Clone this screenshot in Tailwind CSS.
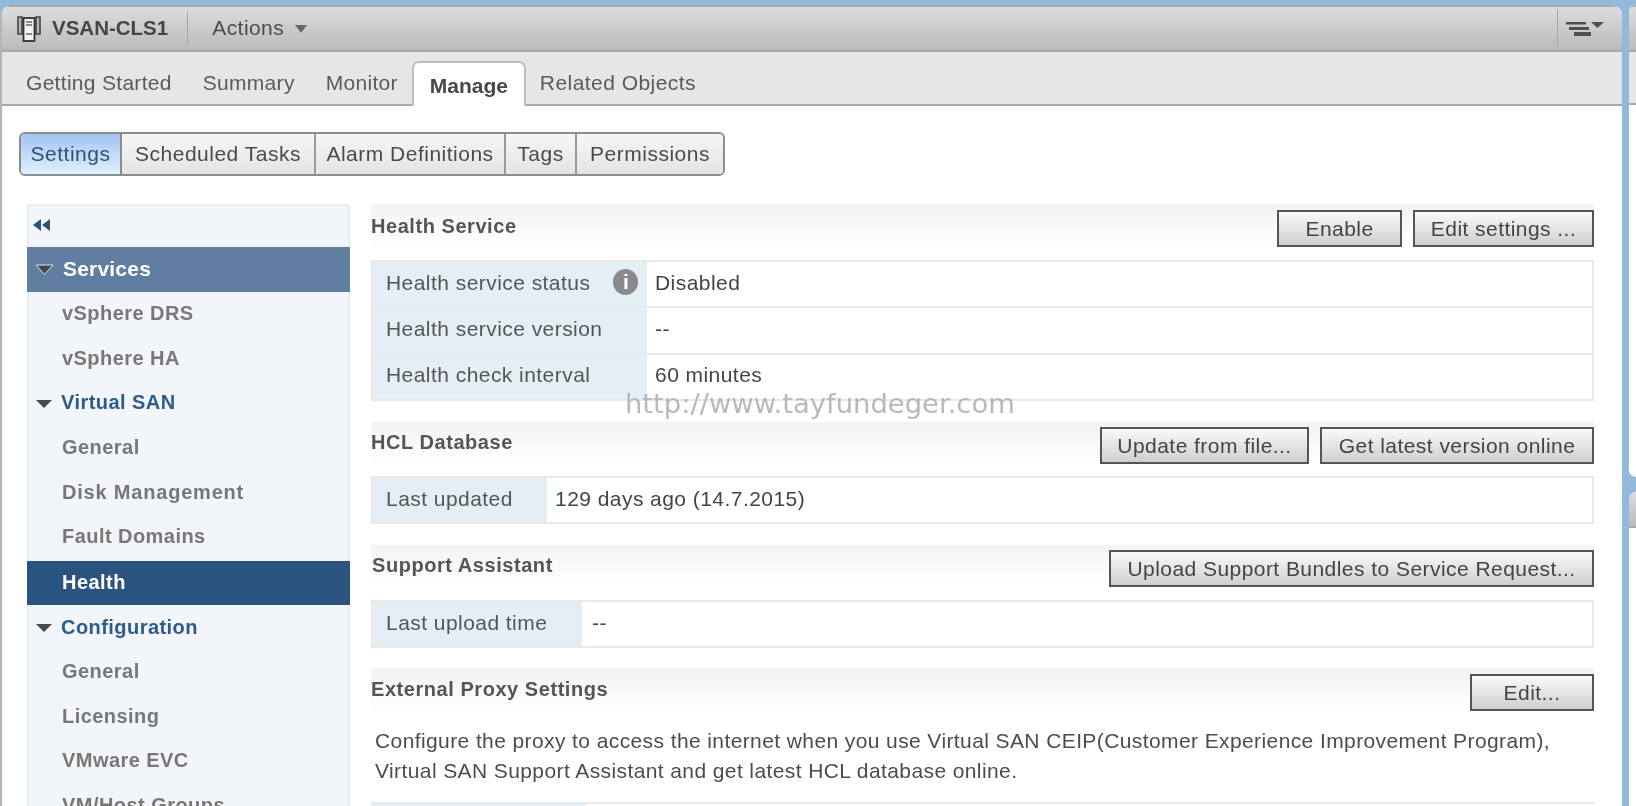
<!DOCTYPE html>
<html lang="en">
<head>
<meta charset="utf-8">
<title>VSAN-CLS1 Manage</title>
<script src="https://cdn.jsdelivr.net/npm/@tailwindcss/browser@4"></script>
</head>
<body class="m-0 overflow-hidden bg-[#93b9da]">
<div class="flex h-[806px] w-[1636px] overflow-hidden bg-[#93b9da] pt-[5px] font-['Liberation_Sans',Arial,sans-serif] text-[21px] tracking-[0.45px] text-[#555] blur-[0.35px]">
  <!-- main panel -->
  <div class="flex h-[801px] w-[1622px] flex-col overflow-hidden rounded-tl-[10px] rounded-tr-[10px] border-l-2 border-[#b5b5b5] bg-white">
    <div class="flex h-[47px] shrink-0 items-center border-t-2 border-b-2 border-[#a9a9a9] bg-gradient-to-b from-[#dcdde0] to-[#b9babc] pb-[1px]">
      <svg class="ml-[15px] h-[27px] w-[24px] shrink-0" viewBox="0 0 24 27"><path d="M1 2h4v17H1zM19 2h4v17h-4z" fill="#b5b5b5" stroke="#444" stroke-width="1.600"/><rect x="6.500" y="3" width="11" height="23" fill="#f2f2f2" stroke="#333" stroke-width="1.800"/><path d="M9 7h6M9 10h6M9 19h6" stroke="#666" stroke-width="1.500"/></svg>
      <span class="ml-[11px] text-[20.500px] font-bold tracking-normal text-[#454545]">VSAN-CLS1</span>
      <span class="ml-[19px] h-[34px] w-px bg-[#a5a5a5]"></span>
      <span class="ml-[24px] text-[#4c4c4c]">Actions</span>
      <span class="ml-[11px] mt-[1px] h-0 w-0 border-x-[6px] border-t-[8px] border-x-transparent border-t-[#666]"></span>
      <span class="ml-auto h-[38px] w-px bg-[#a5a5a5]"></span>
      <svg class="ml-[8px] mr-[18px] h-[15px] w-[38px]" viewBox="0 0 38 15" fill="#505050"><path d="M0 1h20v2.500H0zM3 6h20v3H3zM8 11h17v4H8zM25 1h13l-6.500 6z"/></svg>
    </div>
    <div class="relative flex h-[54px] shrink-0 items-end gap-[31px] border-b-2 border-[#a9a9a9] bg-[#e6e6e6] pl-[24px] tracking-[0.3px] text-[#5a5a5a]">
      <span class="pb-[6px]">Getting Started</span>
      <span class="pb-[6px]">Summary</span>
      <span class="pb-[6px]">Monitor</span>
      <span class="relative z-10 -mx-[17px] -mb-[2px] flex h-[45px] w-[114px] items-center justify-center rounded-t-[7px] border-x-2 border-t-2 border-[#bdbdbd] bg-white pt-[2px] font-bold tracking-normal text-[#484848]">Manage</span>
      <span class="pb-[6px] tracking-[0.45px]">Related Objects</span>
    </div>
    <div class="ml-[17px] mt-[26px] flex h-[44px] w-[706px] shrink-0 overflow-hidden rounded-[6px] border-2 border-[#8c8c8c] tracking-[0.5px] text-[#4a4a4a]">
      <span class="flex w-[101px] items-center justify-center border-r-2 border-[#8c8c8c] bg-gradient-to-b from-[#9fc5f2] to-[#e1f0ff] text-[#33506f]">Settings</span>
      <span class="flex w-[194px] items-center justify-center border-r-2 border-[#9a9a9a] bg-gradient-to-b from-[#f6f6f6] to-[#e4e4e4]">Scheduled Tasks</span>
      <span class="flex w-[190px] items-center justify-center border-r-2 border-[#9a9a9a] bg-gradient-to-b from-[#f6f6f6] to-[#e4e4e4]">Alarm Definitions</span>
      <span class="flex w-[71px] items-center justify-center border-r-2 border-[#9a9a9a] bg-gradient-to-b from-[#f6f6f6] to-[#e4e4e4]">Tags</span>
      <span class="flex flex-1 items-center justify-center bg-gradient-to-b from-[#f6f6f6] to-[#e4e4e4]">Permissions</span>
    </div>
    <div class="mt-[28px] flex min-h-0 flex-1 pl-[25px]">
      <!-- sidebar -->
      <div class="w-[323px] shrink-0 border-x-2 border-t-2 border-[#e8eef5] bg-[#f2f6fb] text-[20px] font-bold text-[#777]">
        <div class="flex h-[41px] items-center pb-[3px] pl-[4px]">
          <svg class="h-[12px] w-[18px]" viewBox="0 0 18 12" fill="#2b5380"><path d="M0 6l8-6v12zM9 6l8-6v12z"/></svg>
        </div>
        <div class="-mx-[2px] flex h-[45px] items-center bg-[#5f7ea0] pb-[2px] text-[21px] tracking-[0.2px] text-white">
          <svg class="ml-[8px] mr-[9px] mt-[2px] h-[11px] w-[19px]" viewBox="0 0 19 11"><path d="M1 1h17l-8.500 9.500z" fill="#484848" stroke="#dfe6ee" stroke-width="1"/></svg>Services
        </div>
        <div class="flex h-[44px] items-center pb-[2px] pl-[33px]">vSphere DRS</div>
        <div class="flex h-[45px] items-center pb-[2px] pl-[33px]">vSphere HA</div>
        <div class="flex h-[44px] items-center pb-[2px] text-[#2e5a8c]"><span class="ml-[7px] mr-[9px] mt-[3px] h-0 w-0 border-x-[8px] border-t-[8px] border-x-transparent border-t-[#484848]"></span>Virtual SAN</div>
        <div class="flex h-[45px] items-center pb-[2px] pl-[33px]">General</div>
        <div class="flex h-[45px] items-center pb-[2px] pl-[33px] tracking-[0.8px]">Disk Management</div>
        <div class="flex h-[46px] items-center pb-[4px] pl-[33px]">Fault Domains</div>
        <div class="-mx-[2px] flex h-[44px] items-center bg-[#2b5380] pb-[3px] pl-[35px] text-white">Health</div>
        <div class="flex h-[45px] items-center pb-[2px] text-[#2e5a8c]"><span class="ml-[7px] mr-[9px] mt-[3px] h-0 w-0 border-x-[8px] border-t-[8px] border-x-transparent border-t-[#484848]"></span>Configuration</div>
        <div class="flex h-[45px] items-center pb-[4px] pl-[33px]">General</div>
        <div class="flex h-[45px] items-center pb-[4px] pl-[33px]">Licensing</div>
        <div class="flex h-[44px] items-center pb-[4px] pl-[33px]">VMware EVC</div>
        <div class="flex h-[45px] items-center pb-[4px] pl-[33px]">VM/Host Groups</div>
      </div>
      <!-- content -->
      <div class="relative ml-[21px] w-[1223px] shrink-0">
        <div class="flex h-[44px] items-start justify-between bg-gradient-to-b from-[#f3f3f3] to-white">
          <span class="pt-[7px] text-[20px] font-bold tracking-[0.55px] text-[#555]">Health Service</span>
          <div class="mt-[6px] flex gap-[11px]">
            <button class="h-[37px] w-[125px] border-2 border-[#555] bg-gradient-to-b from-[#fafafa] to-[#cfcfcf] tracking-[0.45px] text-[#444]">Enable</button>
            <button class="h-[37px] w-[181px] border-2 border-[#555] bg-gradient-to-b from-[#fafafa] to-[#cfcfcf] tracking-[0.45px] text-[#444]">Edit settings ...</button>
          </div>
        </div>
        <div class="mt-[12px] border-2 border-[#e8e8e8]">
          <div class="flex h-[46px] border-b-2 border-[#e8e8e8]">
            <div class="flex w-[274px] items-center bg-[#e4eef5] pb-[3px] pl-[13px]">Health service status<span class="-mt-[2px] ml-[23px] flex h-[26px] w-[25px] items-center justify-center rounded-full bg-[#8a8a8a] text-[21px] font-bold tracking-normal text-white">i</span></div>
            <div class="flex items-center pb-[3px] pl-[8px] text-[#444]">Disabled</div>
          </div>
          <div class="flex h-[47px] border-b-2 border-[#e8e8e8]">
            <div class="flex w-[274px] items-center bg-[#e4eef5] pb-[3px] pl-[13px]">Health service version</div>
            <div class="flex items-center pb-[3px] pl-[8px] text-[#444]">--</div>
          </div>
          <div class="flex h-[44px]">
            <div class="flex w-[274px] items-center bg-[#e4eef5] pb-[4px] pl-[13px]">Health check interval</div>
            <div class="flex items-center pb-[4px] pl-[8px] text-[#444]">60 minutes</div>
          </div>
        </div>
        <div class="mt-[21px] flex h-[42px] items-start justify-between bg-gradient-to-b from-[#f3f3f3] to-white">
          <span class="pt-[5px] text-[20px] font-bold tracking-[0.55px] text-[#555]">HCL Database</span>
          <div class="mt-[5px] flex gap-[11px]">
            <button class="h-[37px] w-[209px] border-2 border-[#555] bg-gradient-to-b from-[#fafafa] to-[#cfcfcf] tracking-[0.45px] text-[#444]">Update from file...</button>
            <button class="h-[37px] w-[274px] border-2 border-[#555] bg-gradient-to-b from-[#fafafa] to-[#cfcfcf] tracking-[0.45px] text-[#444]">Get latest version online</button>
          </div>
        </div>
        <div class="mt-[12px] flex h-[48px] border-2 border-[#e8e8e8]">
          <div class="flex w-[174px] items-center bg-[#e4eef5] pb-[3px] pl-[13px]">Last updated</div>
          <div class="flex items-center pb-[3px] pl-[8px] text-[#444]">129 days ago (14.7.2015)</div>
        </div>
        <div class="mt-[21px] flex h-[42px] items-start justify-between bg-gradient-to-b from-[#f3f3f3] to-white">
          <span class="pl-[1px] pt-[5px] text-[20px] font-bold tracking-[0.55px] text-[#555]">Support Assistant</span>
          <button class="mt-[5px] h-[37px] w-[485px] border-2 border-[#555] bg-gradient-to-b from-[#fafafa] to-[#cfcfcf] tracking-[0.45px] text-[#444]">Upload Support Bundles to Service Request...</button>
        </div>
        <div class="mt-[13px] flex h-[48px] border-2 border-[#e8e8e8]">
          <div class="flex w-[209px] items-center bg-[#e4eef5] pb-[3px] pl-[13px]">Last upload time</div>
          <div class="flex items-center pb-[3px] pl-[10px] text-[#444]">--</div>
        </div>
        <div class="mt-[20px] flex h-[44px] items-start justify-between bg-gradient-to-b from-[#f3f3f3] to-white">
          <span class="pt-[6px] text-[20px] font-bold tracking-[0.55px] text-[#555]">External Proxy Settings</span>
          <button class="mt-[6px] h-[37px] w-[124px] border-2 border-[#555] bg-gradient-to-b from-[#fafafa] to-[#cfcfcf] tracking-[0.45px] text-[#444]">Edit...</button>
        </div>
        <p class="m-0 mt-[14px] pl-[4px] leading-[30px] tracking-[0.4px] text-[#4c4c4c]">Configure the proxy to access the internet when you use Virtual SAN CEIP(Customer Experience Improvement Program),<br>Virtual SAN Support Assistant and get latest HCL database online.</p>
        <div class="mt-[16px] flex h-[40px] border-t-2 border-[#e8e8e8]">
          <div class="w-[215px] bg-[#e4eef5]"></div>
        </div>
        <span class="absolute left-[254px] top-[185px] font-['DejaVu_Sans',sans-serif] text-[27.400px] leading-[30px] tracking-normal text-[#b9b9b9]">http://www.tayfundeger.com</span>
      </div>
    </div>
  </div>
  <!-- next panels on the far right -->
  <div class="ml-[7px] flex h-[801px] flex-1 flex-col">
    <div class="flex h-[472px] flex-col overflow-hidden rounded-l-[8px] bg-white">
      <div class="h-[47px] border-y-2 border-[#a9a9a9] bg-gradient-to-b from-[#dcdde0] to-[#b9babc]"></div>
      <div class="h-[53px] border-b-2 border-[#a9a9a9] bg-[#e6e6e6]"></div>
    </div>
    <div class="mt-[15px] flex flex-1 flex-col overflow-hidden rounded-tl-[8px] bg-white">
      <div class="h-[36px] border-b-2 border-[#a9a9a9] bg-gradient-to-b from-[#dcdde0] to-[#b9babc]"></div>
    </div>
  </div>
</div>
</body>
</html>
